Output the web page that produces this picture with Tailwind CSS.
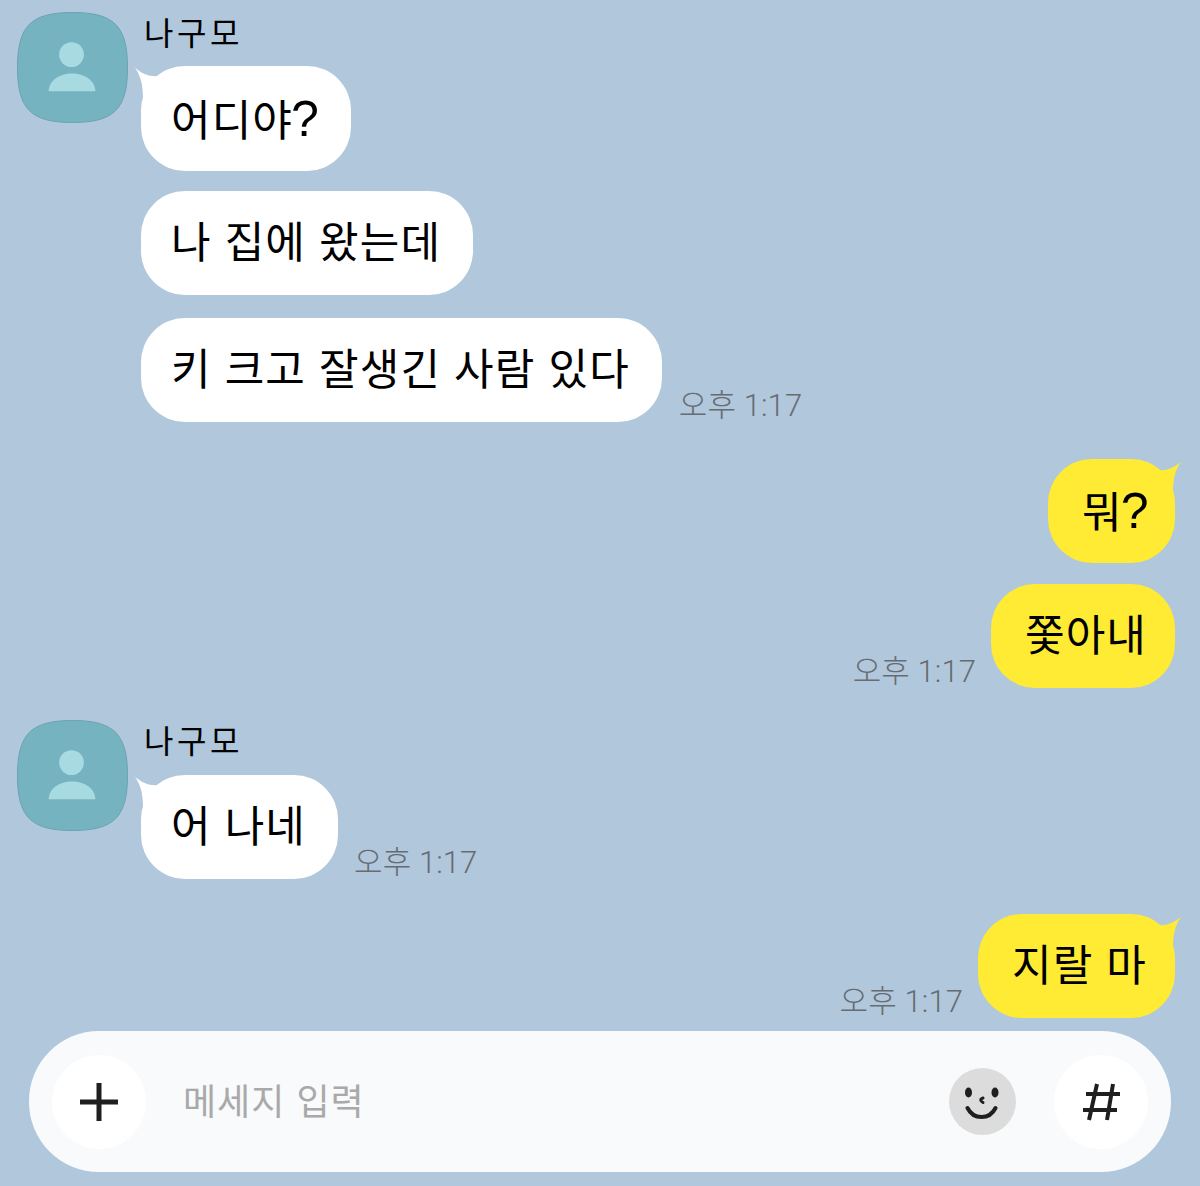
<!DOCTYPE html>
<html lang="ko"><head><meta charset="utf-8">
<script src="https://cdn.jsdelivr.net/npm/@tailwindcss/browser@4"></script></head>
<body class="m-0">
<div class="w-[1200px] h-[1186px] overflow-hidden relative bg-[#b1c7dc] font-['Noto_Sans_CJK_KR','Noto_Sans',sans-serif] text-black">
  <div class="flex flex-col pt-[12px]">
    <!-- group 1 -->
    <div class="flex pl-[17px] gap-[13px]">
      <svg class="shrink-0" width="111" height="111" viewBox="0 0 112 112"><path d="M56 .5C98 .5 111.500 14 111.500 56S98 111.500 56 111.500.5 98 .5 56 14 .5 56 .5z" fill="#76b3c0" stroke="#6aa3b2"/><circle cx="55" cy="43" r="12.500" fill="#a8dae2"/><path d="M32 80c0-11 11-18 23.500-18S79 69 79 80z" fill="#a8dae2"/></svg>
      <div class="flex flex-col">
        <div class="h-[54px] pl-[3px] text-[32px] leading-[39px] tracking-[3.5px]">나구모</div>
        <div class="relative w-[210px] h-[105px] pl-[30px] bg-white rounded-[44px] flex items-center font-['Liberation_Sans','Noto_Sans_CJK_KR',sans-serif] text-[43px] tracking-[1.1px] leading-none mb-[20px]"><span class="whitespace-nowrap">어디야<span class="text-[50px] leading-none ml-[-2px]">?</span></span>
          <svg class="absolute left-[-6px] top-[2px]" width="30" height="30" viewBox="0 0 30 30"><path d="M0 0C8 6 14 9 24 8L24 30L8 30C8 18 6 8 0 0z" fill="#fff"/></svg>
        </div>
        <div class="w-fit h-[104px] pl-[30px] pr-[32px] bg-white rounded-[44px] flex items-center font-['Liberation_Sans','Noto_Sans_CJK_KR',sans-serif] text-[43px] tracking-[1.1px] leading-none mb-[23px]">나 집에 왔는데</div>
        <div class="flex items-end gap-[17px]">
          <div class="h-[104px] pl-[30px] pr-[32px] bg-white rounded-[44px] flex items-center font-['Liberation_Sans','Noto_Sans_CJK_KR',sans-serif] text-[43px] tracking-[1.1px] leading-none">키 크고 잘생긴 사람 있다</div>
          <div class="font-['Roboto','Noto_Sans_CJK_KR',sans-serif] text-[31px] leading-[36px] text-[#666c72] font-light tracking-[0.1px] mb-[-2px]">오후 1:17</div>
        </div>
      </div>
    </div>
    <!-- me 1 -->
    <div class="flex flex-col items-end pr-[25px] mt-[37px]">
      <div class="relative w-[127px] h-[104px] pl-[34px] bg-[#ffeb33] rounded-[44px] flex items-center font-['Liberation_Sans','Noto_Sans_CJK_KR',sans-serif] text-[43px] tracking-[1.1px] leading-none mb-[21px]"><span class="whitespace-nowrap">뭐<span class="text-[50px] leading-none ml-[-2px]">?</span></span>
        <svg class="absolute right-[-6px] top-[3px]" width="30" height="30" viewBox="0 0 30 30"><path d="M30 0C22 6 16 9 6 8L6 30L22 30C22 18 24 8 30 0z" fill="#ffeb33"/></svg>
      </div>
      <div class="flex items-end gap-[15px]">
        <div class="font-['Roboto','Noto_Sans_CJK_KR',sans-serif] text-[31px] leading-[36px] text-[#666c72] font-light tracking-[0.1px] mb-[-2px]">오후 1:17</div>
        <div class="h-[104px] pl-[34px] pr-[28px] bg-[#ffeb33] rounded-[44px] flex items-center font-['Liberation_Sans','Noto_Sans_CJK_KR',sans-serif] text-[43px] tracking-[1.1px] leading-none">쫓아내</div>
      </div>
    </div>
    <!-- group 2 -->
    <div class="flex pl-[17px] gap-[13px] mt-[32px]">
      <svg class="shrink-0" width="111" height="111" viewBox="0 0 112 112"><path d="M56 .5C98 .5 111.500 14 111.500 56S98 111.500 56 111.500.5 98 .5 56 14 .5 56 .5z" fill="#76b3c0" stroke="#6aa3b2"/><circle cx="55" cy="43" r="12.500" fill="#a8dae2"/><path d="M32 80c0-11 11-18 23.500-18S79 69 79 80z" fill="#a8dae2"/></svg>
      <div class="flex flex-col">
        <div class="h-[55px] pl-[3px] text-[32px] leading-[39px] tracking-[3.5px]">나구모</div>
        <div class="flex items-end gap-[16px]">
          <div class="relative h-[104px] pl-[30px] pr-[32px] bg-white rounded-[44px] flex items-center font-['Liberation_Sans','Noto_Sans_CJK_KR',sans-serif] text-[43px] tracking-[1.1px] leading-none">어 나네
            <svg class="absolute left-[-6px] top-[2px]" width="30" height="30" viewBox="0 0 30 30"><path d="M0 0C8 6 14 9 24 8L24 30L8 30C8 18 6 8 0 0z" fill="#fff"/></svg>
          </div>
          <div class="font-['Roboto','Noto_Sans_CJK_KR',sans-serif] text-[31px] leading-[36px] text-[#666c72] font-light tracking-[0.1px] mb-[-2px]">오후 1:17</div>
        </div>
      </div>
    </div>
    <!-- me 2 -->
    <div class="flex items-end justify-end gap-[15px] pr-[25px] mt-[35px]">
      <div class="font-['Roboto','Noto_Sans_CJK_KR',sans-serif] text-[31px] leading-[36px] text-[#666c72] font-light tracking-[0.1px] mb-[-2px]">오후 1:17</div>
      <div class="relative h-[104px] pl-[34px] pr-[28px] bg-[#ffeb33] rounded-[44px] flex items-center font-['Liberation_Sans','Noto_Sans_CJK_KR',sans-serif] text-[43px] tracking-[1.1px] leading-none">지랄 마
        <svg class="absolute right-[-6px] top-[3px]" width="30" height="30" viewBox="0 0 30 30"><path d="M30 0C22 6 16 9 6 8L6 30L22 30C22 18 24 8 30 0z" fill="#ffeb33"/></svg>
      </div>
    </div>
    <!-- input -->
    <div class="mx-[29px] mt-[13px] h-[141px] rounded-[70px] bg-[#f8fafc] flex items-center pl-[23px] pr-[23px]">
      <div class="w-[94px] h-[94px] rounded-full bg-white flex items-center justify-center shrink-0">
        <svg width="40" height="40" viewBox="0 0 40 40"><path d="M20 1v38M1 20h38" stroke="#1f1f1f" stroke-width="5"/></svg>
      </div>
      <div class="ml-[37px] pb-[6px] flex-1 text-[36px] leading-none text-[#a9a9a9] tracking-[1px]">메세지 입력</div>
      <div class="w-[67px] h-[67px] rounded-full bg-[#dcdcdc] flex items-center justify-center shrink-0 mr-[38px]">
        <svg width="36" height="36" viewBox="0 0 36 36" fill="none"><ellipse cx="3.500" cy="8.500" rx="3.500" ry="5" fill="#1f1f1f"/><ellipse cx="30" cy="8.500" rx="3.500" ry="5" fill="#1f1f1f"/><path d="M18 14c-3 1-3 3 0 4.500" stroke="#1f1f1f" stroke-width="3" stroke-linecap="round"/><path d="M2.500 24c3 6 8 9 14 9s11-3 14-9" stroke="#1f1f1f" stroke-width="4" stroke-linecap="round"/></svg>
      </div>
      <div class="w-[94px] h-[94px] rounded-full bg-white flex items-center justify-center shrink-0">
        <svg width="38" height="38" viewBox="0 0 38 38" fill="none"><path d="M15 1L7 37M31 1L25 37M4 11h34M1 27h34" stroke="#1f1f1f" stroke-width="4"/></svg>
      </div>
    </div>
  </div>
</div>
</body></html>
